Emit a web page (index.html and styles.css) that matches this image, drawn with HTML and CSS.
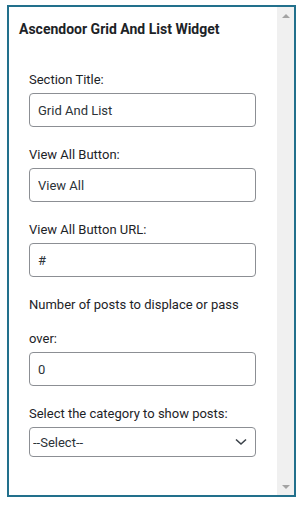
FILE: index.html
```html
<!DOCTYPE html>
<html lang="en">
<head>
    <meta charset="UTF-8">
    <meta name="viewport" content="width=device-width, initial-scale=1.0">
    <title>Ascendoor Grid And List Widget</title>
    <link rel="stylesheet" href="styles.css">
</head>
<body>
    <div class="widget">
        <div class="widget-body">
            <h3 class="widget-title">Ascendoor Grid And List Widget</h3>
            <form class="widget-form">
                <div class="field">
                    <label for="title">Section Title:</label>
                    <input type="text" id="title" value="Grid And List">
                </div>
                <div class="field">
                    <label for="button">View All Button:</label>
                    <input type="text" id="button" value="View All">
                </div>
                <div class="field">
                    <label for="url">View All Button URL:</label>
                    <input type="text" id="url" value="#">
                </div>
                <div class="field">
                    <label for="offset" class="label-wrap">Number of posts to displace or pass over:</label>
                    <input type="number" id="offset" value="0">
                </div>
                <div class="field">
                    <label for="category">Select the category to show posts:</label>
                    <div class="select-wrap">
                        <select id="category">
                            <option>--Select--</option>
                        </select>
                        <svg class="chevron" width="12" height="8" viewBox="0 0 12 8">
                            <path d="M1 1.5 L6 6 L11 1.5" fill="none" stroke="#3c434a" stroke-width="1.6"/>
                        </svg>
                    </div>
                </div>
            </form>
        </div>
        <div class="scrollbar">
            <span class="arrow arrow-up"></span>
            <span class="arrow arrow-down"></span>
        </div>
    </div>
</body>
</html>
```

FILE: styles.css
```css
/* Reset & Global Styles */
* {
    margin: 0;
    padding: 0;
    box-sizing: border-box;
}
body {
    font-family: Roboto, 'Noto Sans', sans-serif;
    font-size: 13px;
    color: #1d2327;
    background: #fff;
    padding: 5px 7px;
}
.widget {
    display: flex;
    height: 492px;
    border: 2px solid #22708c;
    background: #fff;
}
.widget-body {
    flex: 1;
    padding: 12px 10px 0;
}
.widget-title {
    font-size: 14px;
    font-weight: 700;
    line-height: 20px;
    color: #1d2327;
}
.widget-form {
    padding: 11px 11px 0 10px;
}
.field {
    margin-top: 18px;
}
.field:first-child {
    margin-top: 20px;
}
.field label {
    display: block;
    line-height: 20px;
    margin-bottom: 3px;
}
.field label.label-wrap {
    line-height: 34px;
    margin: -7px 0 -4px;
}
.field input {
    display: block;
    width: 100%;
    height: 34px;
    padding: 0 8px;
    border: 1px solid #8c8f94;
    border-radius: 4px;
    font-family: inherit;
    font-size: 13px;
    color: #2c3338;
    background: #fff;
    -moz-appearance: textfield;
}
.field input::-webkit-inner-spin-button {
    -webkit-appearance: none;
}
.select-wrap {
    position: relative;
}
.select-wrap select {
    display: block;
    width: 100%;
    height: 30px;
    padding: 0 24px 0 3px;
    border: 1px solid #8c8f94;
    border-radius: 4px;
    font-family: inherit;
    font-size: 13px;
    color: #2c3338;
    background: #fff;
    appearance: none;
    -webkit-appearance: none;
}
.chevron {
    position: absolute;
    right: 9px;
    top: 11px;
    pointer-events: none;
}
.scrollbar {
    width: 17px;
    background: #f0f0f0;
    display: flex;
    flex-direction: column;
    justify-content: space-between;
    align-items: center;
    padding: 7px 0 6px;
}
.arrow {
    width: 0;
    height: 0;
    border-left: 4px solid transparent;
    border-right: 4px solid transparent;
}
.arrow-up {
    border-bottom: 4px solid #a3a3a3;
}
.arrow-down {
    border-top: 4px solid #a3a3a3;
}
```
